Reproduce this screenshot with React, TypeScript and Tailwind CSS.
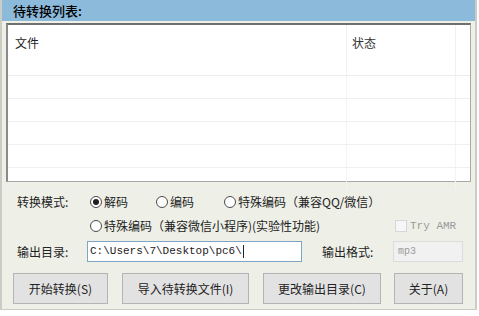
import React from "react";

const font = { fontFamily: '"Noto Sans CJK SC", "Noto Sans", sans-serif' };

function Radio({ checked }: { checked?: boolean }) {
  return (
    <span className="inline-flex h-[12px] w-[12px] shrink-0 items-center justify-center rounded-full border border-[#4a4a4a] bg-white">
      {checked && <span className="h-[6px] w-[6px] rounded-full bg-[#1e1e1e]" />}
    </span>
  );
}

function Btn({ w, label }: { w: string; label: string }) {
  return (
    <div
      className={`${w} flex h-[31px] items-center justify-center border border-[#b4b4b4] bg-[#e2e2e2] text-[12px] text-[#222]`}
    >
      {label}
    </div>
  );
}

export default function App() {
  const rows = [0, 1, 2, 3, 4];
  return (
    <div className="h-[316px] w-[479px] overflow-hidden bg-white text-[12px] text-[#222]" style={font}>
      <div className="flex h-[310px] w-[477px] flex-col border-x-2 border-b border-[#c9cdc4] bg-[#eef0e8]">
        <div className="flex h-[21px] items-center bg-[#8cbadb] pl-[11px]">
          <span className="text-[13px] font-medium text-black">待转换列表:</span>
        </div>
        <div className="ml-[4px] mt-[2px] flex h-[159px] w-[465px] flex-col border-l-2 border-t-2 border-r border-b border-l-[#8a8a8a] border-t-[#6f6f6f] border-r-[#a8a8a8] border-b-[#a8a8a8] bg-white">
          <div className="flex h-[51px] shrink-0 border-b border-[#ececec]">
            <div className="w-[339px] border-r border-[#f0f0f0] pl-[7px] pt-[9px]">文件</div>
            <div className="w-[109px] border-r border-[#f0f0f0] pl-[5px] pt-[9px] text-[#333]">状态</div>
            <div className="flex-1" />
          </div>
          {rows.map((r) => (
            <div key={r} className="flex h-[23px] shrink-0 border-b border-[#efefef]">
              <div className="w-[339px] border-r border-[#f4f4f4]" />
              <div className="w-[109px] border-r border-[#f4f4f4]" />
              <div className="flex-1" />
            </div>
          ))}
        </div>

        <div className="mt-[10px] flex h-[20px] items-center pl-[15px]">
          <span className="w-[73px]">转换模式:</span>
          <span className="flex w-[66px] items-center gap-[2px]">
            <Radio checked />
            <span>解码</span>
          </span>
          <span className="flex w-[68px] items-center gap-[2px]">
            <Radio />
            <span>编码</span>
          </span>
          <span className="flex items-center gap-[2px]">
            <Radio />
            <span>特殊编码（兼容QQ/微信）</span>
          </span>
        </div>

        <div className="mt-[4px] flex h-[20px] items-center pl-[88px]">
          <span className="flex w-[305px] items-center gap-[2px]">
            <Radio />
            <span>特殊编码（兼容微信小程序)(实验性功能)</span>
          </span>
          <span className="flex items-center gap-[3px]">
            <span className="h-[12px] w-[12px] border border-[#d6d6d6] bg-[#f6f6f6]" />
            <span className="text-[11px] text-[#9a9a9a]" style={{ fontFamily: '"Liberation Mono", monospace' }}>
              Try AMR
            </span>
          </span>
        </div>

        <div className="mt-[5px] flex h-[21px] items-center pl-[15px]">
          <span className="w-[70px]">输出目录:</span>
          <div
            className="flex h-[21px] w-[215px] items-center border border-[#7ea6c4] bg-white pl-[2px] text-[11px] text-[#222]"
            style={{ fontFamily: '"Liberation Mono", monospace' }}
          >
            C:\Users\7\Desktop\pc6\
            <span className="ml-[1px] h-[13px] w-[1px] bg-[#222]" />
          </div>
          <span className="ml-[20px] w-[71px]">输出格式:</span>
          <div
            className="flex h-[21px] w-[70px] items-center border border-[#dcdcdc] bg-[#f1f1f1] pl-[4px] text-[10px] text-[#9a9a9a]"
            style={{ fontFamily: '"Liberation Mono", monospace' }}
          >
            mp3
          </div>
        </div>

        <div className="mt-[11px] flex items-center pl-[11px]">
          <Btn w="w-[95px]" label="开始转换(S)" />
          <div className="w-[14px]" />
          <Btn w="w-[127px]" label="导入待转换文件(I)" />
          <div className="w-[14px]" />
          <Btn w="w-[118px]" label="更改输出目录(C)" />
          <div className="w-[13px]" />
          <Btn w="w-[69px]" label="关于(A)" />
        </div>
      </div>
    </div>
  );
}
